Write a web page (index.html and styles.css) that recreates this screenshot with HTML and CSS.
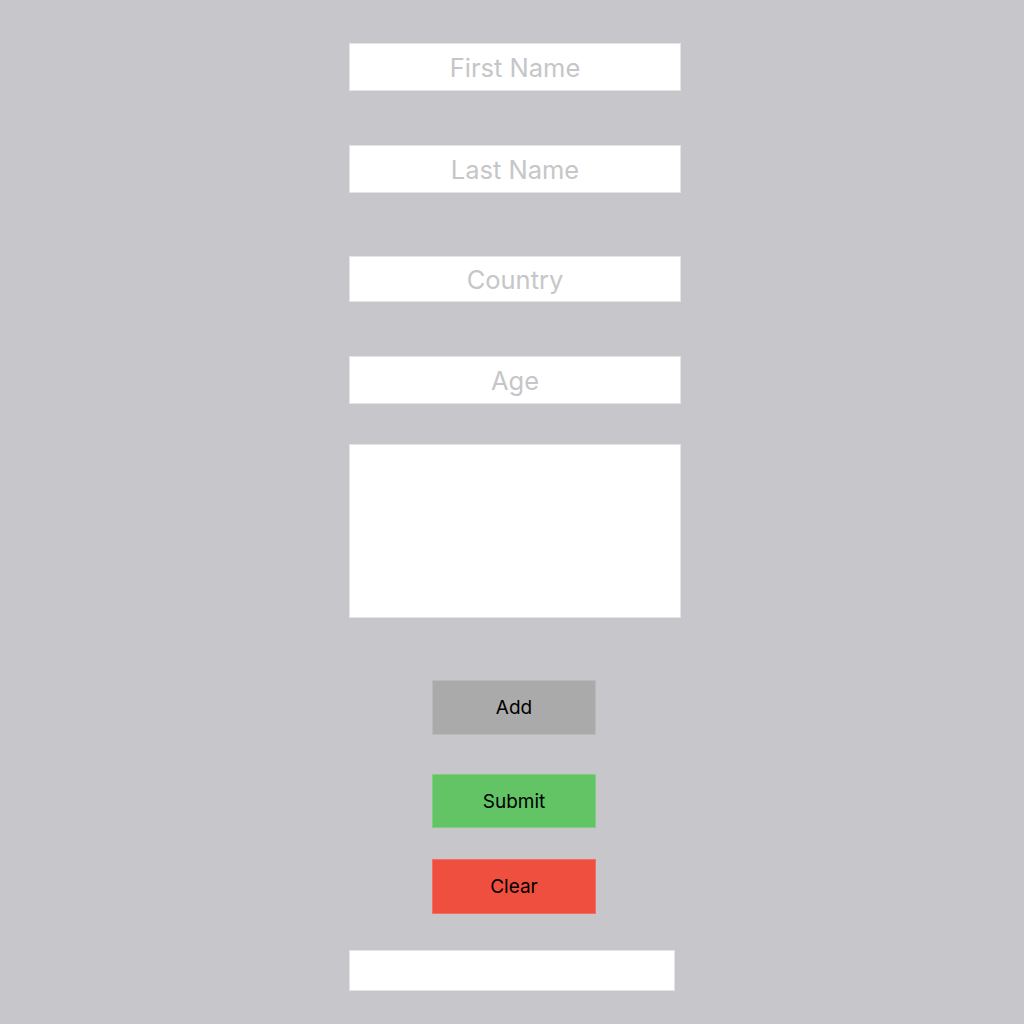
FILE: index.html
```html
<!DOCTYPE html>
<html>
<head>
<meta charset="utf-8">
<link rel="stylesheet" href="styles.css">
</head>
<body>
<main class="form">
  <input class="field f-first" placeholder="First Name">
  <input class="field f-last" placeholder="Last Name">
  <input class="field f-country" placeholder="Country">
  <input class="field f-age" placeholder="Age">
  <textarea class="notes"></textarea>
  <div class="buttons">
    <button class="btn btn-add">Add</button>
    <button class="btn btn-submit">Submit</button>
    <button class="btn btn-clear">Clear</button>
  </div>
  <div class="result"></div>
</main>
</body>
</html>
```

FILE: styles.css
```css
html, body {
  margin: 0;
  padding: 0;
  background: #c7c6cb;
  height: 100%;
}
body {
  font-family: Inter, "Noto Sans", sans-serif;
  overflow: hidden;
}
.form {
  display: flex;
  flex-direction: column;
  align-items: flex-start;
  padding: 43px 0 0 349px;
}
.field {
  box-sizing: border-box;
  width: 332px;
  height: 48px;
  margin: 0;
  border: 1px solid #e4e4e6;
  background: #fff;
  text-align: center;
  font-family: Inter, "Noto Sans", sans-serif;
  font-size: 25.5px;
  color: #222;
  padding: 0;
  outline: none;
}
.field::placeholder {
  color: #c6c6c8;
}
.f-last { margin-top: 54px; }
.f-country { margin-top: 63px; height: 46px; }
.f-age { margin-top: 54px; }
.notes {
  box-sizing: border-box;
  width: 332px;
  height: 174px;
  margin: 40px 0 0 0;
  border: 1px solid #e4e4e6;
  background: #fff;
  resize: none;
  outline: none;
}
.buttons {
  display: flex;
  flex-direction: column;
  margin: 62px 0 0 83px;
}
.btn {
  box-sizing: border-box;
  width: 164px;
  height: 55px;
  margin: 0;
  border: 1px solid rgba(255,255,255,0.18);
  font-family: Inter, "Noto Sans", sans-serif;
  font-size: 19px;
  color: #000;
  padding: 0;
}
.btn-add { background: #aaaaaa; }
.btn-submit { background: #63c466; margin-top: 39px; height: 54px; }
.btn-clear { background: #ef4f3e; margin-top: 31px; }
.result {
  box-sizing: border-box;
  width: 326px;
  height: 41px;
  margin-top: 36px;
  background: #fff;
  border: 1px solid #e4e4e6;
}
```
